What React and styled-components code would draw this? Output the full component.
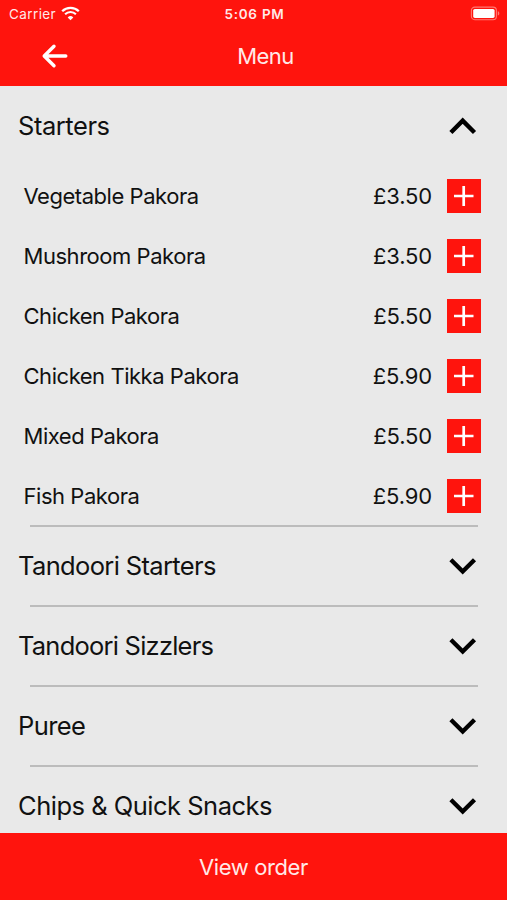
import { useState } from 'react';
import styled, { createGlobalStyle } from 'styled-components';

const sections = [
  {
    title: 'Starters',
    spacing: '-0.45px',
    items: [
      { name: 'Vegetable Pakora', price: '£3.50' },
      { name: 'Mushroom Pakora', price: '£3.50' },
      { name: 'Chicken Pakora', price: '£5.50' },
      { name: 'Chicken Tikka Pakora', price: '£5.90' },
      { name: 'Mixed Pakora', price: '£5.50' },
      { name: 'Fish Pakora', price: '£5.90' },
    ],
  },
  { title: 'Tandoori Starters', spacing: '-0.64px', items: [] },
  { title: 'Tandoori Sizzlers', spacing: '-0.77px', items: [] },
  { title: 'Puree', spacing: '-0.6px', items: [] },
  { title: 'Chips & Quick Snacks', spacing: '-0.5px', items: [] },
];

const WifiIcon = () => (
  <svg width='19' height='15' viewBox='0 0 19 15' fill='none' stroke='#fff'>
    <path d='M1.200 5.200a11.800 11.800 0 0 1 16.600 0' strokeWidth='2.300' />
    <path d='M4.100 8.300a7.600 7.600 0 0 1 10.800 0' strokeWidth='2.100' />
    <path d='M9.500 14.300 6.700 11.400a4 4 0 0 1 5.600 0z' fill='#fff' stroke='none' />
  </svg>
);

const BatteryIcon = () => (
  <svg width='30' height='15' viewBox='0 0 30 15'>
    <rect x='1.4' y='1.1' width='25' height='12.6' rx='3.4' fill='none' stroke='#ff7a74' strokeWidth='1.1' />
    <rect x='3.2' y='2.9' width='21.4' height='9' rx='1.6' fill='#fff' />
    <path d='M27.8 5.200v4.400c1-.4 1.500-1.200 1.500-2.200s-.5-1.800-1.500-2.200z' fill='#ff7a74' />
  </svg>
);

const BackIcon = () => (
  <svg width='28' height='26' viewBox='0 0 28 26' fill='none' stroke='#fff' strokeWidth='3.4' strokeLinecap='round' strokeLinejoin='round'>
    <path d='M24.800 13H3.800M13 3.200 3.200 13l9.800 9.800' />
  </svg>
);

const Chevron = ({ open }) => (
  <svg width='28' height='18' viewBox='0 0 28 18' fill='none' stroke='#000' strokeWidth='4.4'>
    <path d={open ? 'M1.900 15.500 13.700 3.700 25.500 15.500' : 'M1.900 2.700 13.700 14.500 25.500 2.700'} />
  </svg>
);

const PlusIcon = () => (
  <svg width='20' height='20' viewBox='0 0 20 20' stroke='#fff' strokeWidth='2.7'>
    <path d='M0 10h19.500M9.700 0v20' />
  </svg>
);

const App = () => {
  const [open, setOpen] = useState('Starters');

  return (
    <Screen>
      <GlobalStyle />
      <Header>
        <StatusBar>
          <Carrier>
            Carrier
            <WifiIcon />
          </Carrier>
          <Time>5:06 PM</Time>
          <Battery>
            <BatteryIcon />
          </Battery>
        </StatusBar>
        <NavBar>
          <BackButton aria-label='Back'>
            <BackIcon />
          </BackButton>
          <Title>Menu</Title>
        </NavBar>
      </Header>
      <MenuList>
        {sections.map(({ title, spacing, items }) => (
          <Section key={title}>
            <SectionHeader onClick={() => setOpen(open === title ? '' : title)}>
              <SectionTitle $spacing={spacing}>{title}</SectionTitle>
              <Chevron open={open === title} />
            </SectionHeader>
            {open === title &&
              items.map(({ name, price }) => (
                <Item key={name}>
                  <ItemName>{name}</ItemName>
                  <Price>{price}</Price>
                  <AddButton aria-label={`Add ${name}`}>
                    <PlusIcon />
                  </AddButton>
                </Item>
              ))}
          </Section>
        ))}
      </MenuList>
      <OrderButton>View order</OrderButton>
    </Screen>
  );
};

const GlobalStyle = createGlobalStyle`
  * {
    box-sizing: border-box;
  }

  body {
    margin: 0;
    font-family: Inter, 'Liberation Sans', sans-serif;
    color: #111;
  }

  button {
    padding: 0;
    border: 0;
    font: inherit;
    color: inherit;
    cursor: pointer;
  }

  svg {
    display: block;
    flex-shrink: 0;
  }
`;

const Screen = styled.div`
  display: flex;
  flex-direction: column;
  height: 900px;
  overflow: hidden;
  background-color: #e9e9e9;
`;

const Header = styled.header`
  flex: 0 0 86px;
  background-color: #ff140d;
  color: #ffe9e8;
`;

const StatusBar = styled.div`
  display: grid;
  grid-template-columns: 1fr auto 1fr;
  align-items: center;
  height: 27px;
  padding: 0 7px 0 9px;
`;

const Carrier = styled.div`
  display: flex;
  align-items: center;
  gap: 5px;
  font-size: 13.5px;
  letter-spacing: 0.4px;
`;

const Time = styled.div`
  font-size: 13.5px;
  font-weight: 600;
  letter-spacing: 0.75px;
`;

const Battery = styled.div`
  justify-self: end;
`;

const NavBar = styled.div`
  display: grid;
  grid-template-columns: 110px 1fr 86px;
  align-items: center;
  height: 57px;
`;

const BackButton = styled.button`
  justify-self: center;
  background: none;
`;

const Title = styled.h1`
  margin: 0;
  font-size: 22px;
  font-weight: 400;
  letter-spacing: -0.5px;
  text-align: center;
`;

const MenuList = styled.main`
  flex: 1;
  overflow: hidden;
`;

const Section = styled.section`
  & + &::before {
    content: '';
    display: block;
    height: 2px;
    margin: -1px 29px -1px 30px;
    background-color: #bcbcbc;
  }
`;

const SectionHeader = styled.button`
  display: flex;
  align-items: center;
  justify-content: space-between;
  width: 100%;
  height: 80px;
  padding: 0 30px 0 18px;
  background: none;
`;

const SectionTitle = styled.span`
  padding-bottom: 1px;
  font-size: 25.5px;
  letter-spacing: ${({ $spacing }) => $spacing};
`;

const Item = styled.div`
  display: flex;
  align-items: center;
  height: 60px;
  padding: 0 26px 0 23.5px;
  font-size: 22px;
`;

const ItemName = styled.span`
  flex: 1;
  padding-bottom: 1px;
  letter-spacing: -0.46px;
`;

const Price = styled.span`
  margin-right: 15px;
  padding-bottom: 1px;
  letter-spacing: -0.15px;
`;

const AddButton = styled.button`
  display: grid;
  place-items: center;
  width: 34px;
  height: 34px;
  background-color: #ff140d;
`;

const OrderButton = styled.button`
  flex: 0 0 67px;
  background-color: #ff140d;
  color: #ffe9e8;
  font-size: 22px;
  letter-spacing: -0.4px;
`;

export default App;
